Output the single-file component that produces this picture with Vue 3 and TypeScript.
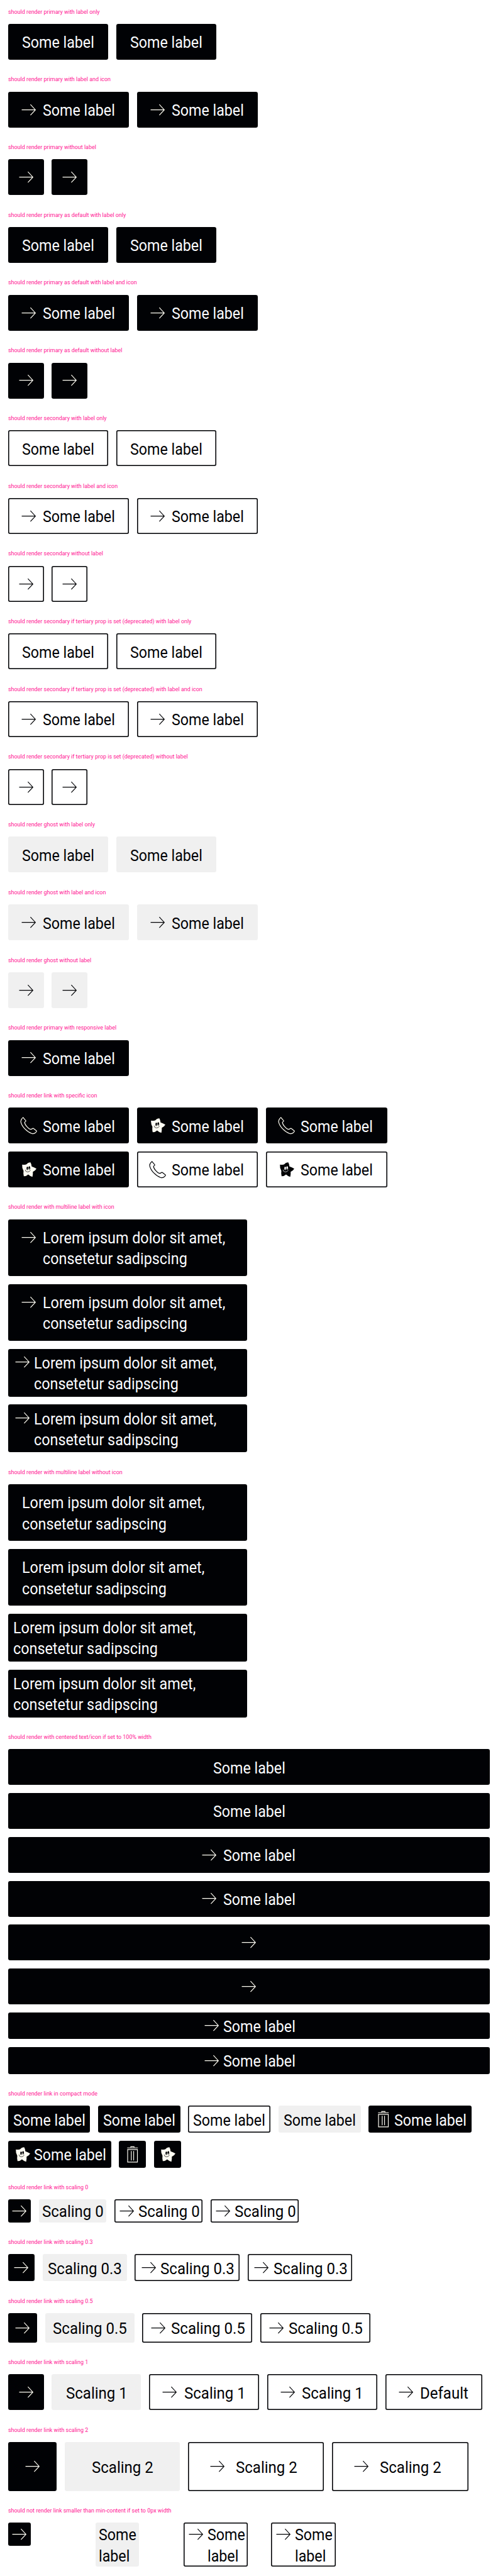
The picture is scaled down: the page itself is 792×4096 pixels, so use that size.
<script setup lang="ts">
type Variant = 'primary' | 'secondary' | 'ghost'
type IconName = 'arrow' | 'phone' | 'star' | 'trash'
type Size = 's0' | 'compact' | 's03' | 's05' | 's1' | 's2'

interface LinkItem {
  variant: Variant
  label: string
  icon?: IconName
  size: Size
}
interface Section {
  title: string
  layout: 'row' | 'multiline' | 'full' | 'cells'
  items: LinkItem[]
}

const link = (variant: Variant, label: string, icon?: IconName, size: Size = 's1'): LinkItem => ({ variant, label, icon, size })
const twice = (item: LinkItem): LinkItem[] => [item, { ...item }]

const SOME = 'Some label'
const LOREM = 'Lorem ipsum dolor sit amet, consetetur sadipscing'

const basics = (name: string, variant: Variant): Section[] => [
  { title: `should render ${name} with label only`, layout: 'row', items: twice(link(variant, SOME)) },
  { title: `should render ${name} with label and icon`, layout: 'row', items: twice(link(variant, SOME, 'arrow')) },
  { title: `should render ${name} without label`, layout: 'row', items: twice(link(variant, '', 'arrow')) },
]

const scaling = (value: string, size: Size, extra: LinkItem[] = []): Section => ({
  title: `should render link with scaling ${value}`,
  layout: 'row',
  items: [
    link('primary', '', 'arrow', size),
    link('ghost', `Scaling ${value}`, undefined, size),
    ...twice(link('secondary', `Scaling ${value}`, 'arrow', size)),
    ...extra,
  ],
})

const sections: Section[] = [
  ...basics('primary', 'primary'),
  ...basics('primary as default', 'primary'),
  ...basics('secondary', 'secondary'),
  ...basics('secondary if tertiary prop is set (deprecated)', 'secondary'),
  ...basics('ghost', 'ghost'),
  { title: 'should render primary with responsive label', layout: 'row', items: [link('primary', SOME, 'arrow')] },
  {
    title: 'should render link with specific icon',
    layout: 'row',
    items: [
      link('primary', SOME, 'phone'),
      link('primary', SOME, 'star'),
      link('primary', SOME, 'phone'),
      link('primary', SOME, 'star'),
      link('secondary', SOME, 'phone'),
      link('secondary', SOME, 'star'),
    ],
  },
  {
    title: 'should render with multiline label with icon',
    layout: 'multiline',
    items: [...twice(link('primary', LOREM, 'arrow')), ...twice(link('primary', LOREM, 'arrow', 'compact'))],
  },
  {
    title: 'should render with multiline label without icon',
    layout: 'multiline',
    items: [...twice(link('primary', LOREM)), ...twice(link('primary', LOREM, undefined, 'compact'))],
  },
  {
    title: 'should render with centered text/icon if set to 100% width',
    layout: 'full',
    items: [
      ...twice(link('primary', SOME)),
      ...twice(link('primary', SOME, 'arrow')),
      ...twice(link('primary', '', 'arrow')),
      ...twice(link('primary', SOME, 'arrow', 'compact')),
    ],
  },
  {
    title: 'should render link in compact mode',
    layout: 'row',
    items: [
      ...twice(link('primary', SOME, undefined, 'compact')),
      link('secondary', SOME, undefined, 'compact'),
      link('ghost', SOME, undefined, 'compact'),
      link('primary', SOME, 'trash', 'compact'),
      link('primary', SOME, 'star', 'compact'),
      link('primary', '', 'trash', 'compact'),
      link('primary', '', 'star', 'compact'),
    ],
  },
  scaling('0', 's0'),
  scaling('0.3', 's03'),
  scaling('0.5', 's05'),
  scaling('1', 's1', [link('secondary', 'Default', 'arrow')]),
  scaling('2', 's2'),
  {
    title: 'should not render link smaller than min-content if set to 0px width',
    layout: 'cells',
    items: [
      link('primary', '', 'arrow', 's0'),
      link('ghost', SOME, undefined, 's0'),
      ...twice(link('secondary', SOME, 'arrow', 's0')),
    ],
  },
]

// Label box width in design units, and how far the glyphs are condensed
const metrics: Record<string, [width: number, condense: number]> = {
  [SOME]: [145, 0.876],
  [LOREM]: [376, 0.88],
  'Scaling 0': [123.3, 0.905],
  'Scaling 0.3': [148.8, 0.907],
  'Scaling 0.5': [148.8, 0.907],
  'Scaling 1': [123.3, 0.905],
  'Scaling 2': [123.3, 0.905],
  Default: [97, 0.905],
}
const labelStyle = (section: Section, item: LinkItem) => {
  const [width, condense] = metrics[item.label]
  return { '--w': section.layout === 'cells' ? 75.5 : width, '--k': condense }
}
</script>

<template>
  <main class="page">
    <section v-for="(section, i) in sections" :key="i" class="section">
      <h2 class="title">{{ section.title }}</h2>
      <div class="list" :class="section.layout">
        <div v-for="(item, j) in section.items" :key="j" class="slot">
          <a class="link" :class="[item.variant, item.size, { bare: !item.label }]">
            <svg v-if="item.icon" class="icon" viewBox="0 0 24 24" aria-hidden="true">
              <path v-if="item.icon === 'arrow'" class="line" d="M4 12H19.6M14 5.9L19.7 12L14 18.1" />
              <path
                v-else-if="item.icon === 'phone'"
                class="line"
                d="M5.6 2.8L8.8 6.6Q8.9 7.3 7.4 8.2C7.2 10.6 11.2 15.4 14 16.3Q15.4 16.4 16.3 15.5Q17 14.9 17.9 15.7L21.1 18.3Q21.2 19.2 19.6 20.4Q17.7 21.8 15.7 21.3C9.8 19.2 4.2 13.2 3 8Q2.4 5.4 5.6 2.8Z"
              />
              <g v-else-if="item.icon === 'star'">
                <path
                  class="solid"
                  d="M4.5 6.4Q6.6 6.8 9.2 6.1Q11.5 3.6 14 3.8Q15 5.2 15.4 8.4Q18.1 9.1 20.9 11Q19.6 13.5 16.8 14.6Q17 17.8 16.3 20.3Q13.8 19.8 11.5 17.6Q9.1 19.8 6.4 19.7Q5.6 17 6.1 13.6Q4.1 9.8 4.5 6.4Z"
                />
                <ellipse class="hole" cx="10.5" cy="10.7" rx="1" ry="2" />
                <ellipse class="hole" cx="12.8" cy="10.2" rx="1" ry="2" />
                <circle class="solid" cx="10.9" cy="11.5" r=".42" />
                <circle class="solid" cx="12.5" cy="11.1" r=".42" />
                <path class="smile" d="M8 12.2Q8.3 14.8 10.7 14.8Q13.2 14.7 14.1 12.6" />
              </g>
              <path
                v-else
                class="line"
                d="M10.1 4V3.2H13.9V4M6 4.5H18.2M6.5 6.4H17.7V20.8H6.5ZM10.7 8.2V19M13.4 8.2V19"
              />
            </svg>
            <span v-if="item.label" class="label" :style="labelStyle(section, item)">
              <span class="text">{{ item.label }}</span>
            </span>
          </a>
        </div>
      </div>
    </section>
  </main>
</template>

<style>
body {
  margin: 0;
  background: #fff;
}
</style>

<style scoped>
.page {
  --u: 0.7924px;
  height: 4096px;
  overflow: hidden;
  font-family: Roboto, 'Liberation Sans', sans-serif;
}
.section {
  padding: calc(var(--u) * 16);
}
.title {
  height: calc(var(--u) * 16);
  margin: 0 0 calc(var(--u) * 16);
  font-size: calc(var(--u) * 12);
  line-height: calc(var(--u) * 16);
  font-weight: 400;
  color: #ff1493;
  white-space: nowrap;
  transform: scaleX(0.94);
  transform-origin: 0 50%;
}
.list {
  display: flex;
  flex-wrap: wrap;
  align-items: flex-start;
  gap: calc(var(--u) * 16);
}
.slot {
  display: flex;
}
.multiline .slot {
  width: calc(var(--u) * 480);
}
.multiline,
.full {
  flex-direction: column;
}
.full .slot {
  width: 100%;
}
.cells .slot {
  width: calc(var(--u) * 160);
  align-items: flex-start;
}
.link {
  --x: 28;
  --y: 15;
  --gap: 8;
  display: flex;
  align-items: flex-start;
  box-sizing: border-box;
  padding: calc(var(--u) * var(--y)) calc(var(--u) * var(--x));
  border-radius: calc(var(--u) * 4);
  font-size: calc(var(--u) * 33.5);
  line-height: calc(var(--u) * 42);
  color: #010205;
}
.multiline .link,
.full .link {
  width: 100%;
}
.full .link {
  justify-content: center;
}
.s0 {
  --x: 6;
  --y: 2;
  --gap: 2;
}
.compact {
  --x: 10;
  --y: 6;
  --gap: 2;
}
.s03 {
  --x: 9.8;
  --y: 6;
  --gap: 2.4;
}
.s05 {
  --x: 15;
  --y: 8.5;
  --gap: 4;
}
.s2 {
  --x: 54;
  --y: 28;
  --gap: 16;
}
.bare {
  --x: var(--y);
  --gap: 0;
}
.primary {
  background: #010205;
  color: #fbfcff;
}
/* Outline of 1.58px: one full pixel and one partly covered */
.secondary {
  box-shadow:
    inset 0 0 0 1px #010205,
    inset 0 0 0 2px rgba(1, 2, 5, 0.58);
}
.ghost {
  background: #f0f0f0;
}
.label {
  flex: none;
  display: block;
  box-sizing: border-box;
  width: calc(var(--u) * var(--w));
  height: calc(var(--u) * 42);
  padding-top: calc(var(--u) * 0.6);
}
.multiline .label,
.cells .label {
  height: calc(var(--u) * 84);
}
.text {
  display: block;
  width: calc(var(--u) * (var(--w) + 0.6) / var(--k));
  transform: scaleX(var(--k));
  transform-origin: 0 0;
}
.row .text,
.full .text {
  white-space: nowrap;
}
.icon {
  flex: none;
  display: block;
  width: calc(var(--u) * 42);
  height: calc(var(--u) * 42);
  margin-left: calc(var(--u) * var(--gap) * -1);
  margin-right: calc(var(--u) * var(--gap));
}
.line,
.smile {
  fill: none;
  stroke: #010205;
  stroke-width: 0.85;
}
.smile {
  stroke: #fff;
  stroke-width: 0.5;
}
.solid {
  fill: #010205;
}
.hole {
  fill: #fff;
}
.primary .line {
  stroke: #fffdf3;
}
.primary .solid {
  fill: #fffdf3;
}
.primary .hole {
  fill: #010205;
}
.primary .smile {
  stroke: #010205;
}
</style>
